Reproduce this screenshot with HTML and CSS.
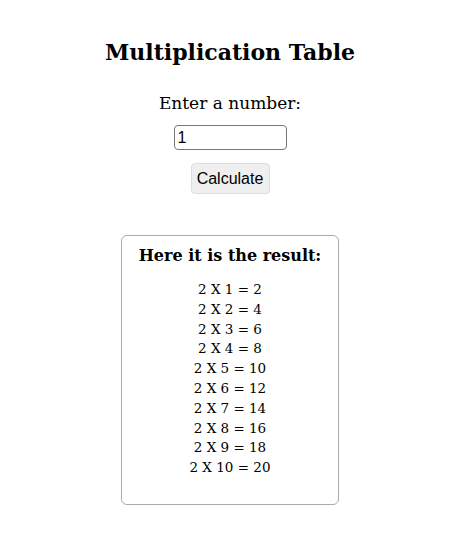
FILE: index.html
```html
<!DOCTYPE html>
<html>
<head>
<meta charset="utf-8">
<link rel="stylesheet" href="styles.css">
</head>
<body>
<main class="page">
  <h1 class="title">Multiplication Table</h1>
  <label class="prompt" for="num">Enter a number:</label>
  <input class="num-input" id="num" type="text" value="1">
  <button class="calc-btn">Calculate</button>
  <section class="result">
    <h2 class="result-title">Here it is the result:</h2>
    <ul class="rows">
      <li>2 X 1 = 2</li>
      <li>2 X 2 = 4</li>
      <li>2 X 3 = 6</li>
      <li>2 X 4 = 8</li>
      <li>2 X 5 = 10</li>
      <li>2 X 6 = 12</li>
      <li>2 X 7 = 14</li>
      <li>2 X 8 = 16</li>
      <li>2 X 9 = 18</li>
      <li>2 X 10 = 20</li>
    </ul>
  </section>
</main>
</body>
</html>
```
FILE: styles.css
```css
html, body {
  margin: 0;
  padding: 0;
  background: #fff;
}
.page {
  display: flex;
  flex-direction: column;
  align-items: center;
  font-family: "DejaVu Serif", "Liberation Serif", serif;
  color: #000;
  padding: 36px 4px 0 0;
}
.title {
  margin: 0;
  font-size: 22px;
  line-height: 32px;
  font-weight: bold;
}
.prompt {
  margin-top: 23px;
  font-size: 17px;
  line-height: 24px;
}
.num-input {
  margin-top: 10px;
  box-sizing: border-box;
  width: 113px;
  height: 25px;
  border: 1px solid #767676;
  border-radius: 4px;
  padding: 1px 3px;
  font-family: "Liberation Sans", Arial, sans-serif;
  font-size: 16px;
  color: #000;
}
.calc-btn {
  margin-top: 13px;
  box-sizing: border-box;
  width: 79px;
  height: 31px;
  background: #efefef;
  border: 1px solid #dedede;
  border-radius: 4px;
  font-family: "Liberation Sans", Arial, sans-serif;
  font-size: 16px;
  color: #000;
  padding: 0;
}
.result {
  margin-top: 41px;
  box-sizing: border-box;
  width: 218px;
  height: 270px;
  border: 1px solid #aaa;
  border-radius: 6px;
  display: flex;
  flex-direction: column;
  align-items: center;
  padding-top: 8px;
}
.result-title {
  margin: 0;
  font-size: 16px;
  line-height: 24px;
  font-weight: bold;
}
.rows {
  list-style: none;
  margin: 12px 0 0;
  padding: 0;
  text-align: center;
  font-size: 13.5px;
  line-height: 19.8px;
}
```
